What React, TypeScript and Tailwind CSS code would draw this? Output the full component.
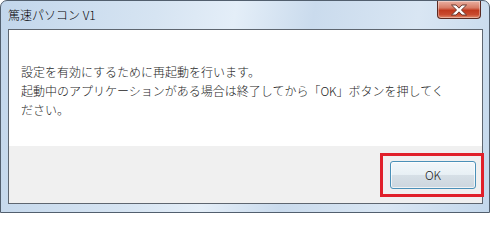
import React from "react"

const jp = "font-['Noto_Sans_CJK_JP','Noto_Sans',sans-serif]"

function CloseButton() {
  return (
    <div className="absolute right-[8px] top-0 flex h-[18px] w-[44px] items-center justify-center rounded-b-[4px] border border-t-0 border-[#5a2a22] bg-[linear-gradient(180deg,#eab0a2_0%,#d77c66_40%,#c0391e_55%,#c94a2e_80%,#e08a6c_100%)] shadow-[inset_0_0_0_1px_rgba(255,255,255,0.35)]">
      <svg width="20" height="12" viewBox="0 0 20 12">
        <path
          d="M2.5 1 H7 L10 4.2 L13 1 H17.5 L12.4 6 L17.5 11 H13 L10 7.8 L7 11 H2.5 L7.6 6 Z"
          fill="#ffffff"
          stroke="#5b2b22"
          strokeWidth="0.9"
          strokeLinejoin="round"
        />
      </svg>
    </div>
  )
}

export default function App() {
  return (
    <div className={`relative flex h-[213px] w-[490px] flex-col overflow-hidden rounded-t-[7px] border border-[#525f6e] bg-[linear-gradient(100deg,#c2d6eb_0%,#d6e4f2_30%,#e4eef8_45%,#cadbed_60%,#d9e6f3_80%,#c4d8ec_100%)] font-light ${jp}`}>
      {/* Title bar */}
      <div className="flex h-[28px] shrink-0 items-center pl-[7px] text-[12px] text-black">
        篤速パソコン V1
      </div>
      <CloseButton />

      {/* Client area */}
      <div className="ml-[7px] mr-[6px] flex flex-col border border-[#5e6670] bg-white">
        <div className="h-[116px] bg-white pl-[12px] pt-[32px] text-[12px] leading-[19px] text-[#1c1c1c]">
          <p>
            設定を有効にするために再起動を行います。
            <br />
            起動中のアプリケーションがある場合は終了してから「OK」ボタンを押してく
            <br />
            ださい。
          </p>
        </div>
        <div className="flex h-[57px] items-start justify-end bg-[#f0f0f0] pr-[6px] pt-[15px]">
          <button className="flex h-[28px] w-[86px] items-center justify-center rounded-[3px] border border-[#4a90b8] bg-[linear-gradient(180deg,#f2f7fa_0%,#e8f0f5_48%,#d6dfe6_52%,#ccd6de_100%)] text-[12px] text-[#1a1a1a] shadow-[inset_0_0_0_1px_rgba(255,255,255,0.7)]">
            OK
          </button>
        </div>
      </div>

      {/* Annotation box */}
      <div className="pointer-events-none absolute left-[379px] top-[152px] h-[44px] w-[104px] border-[3px] border-[#e0202a]" />
    </div>
  )
}
